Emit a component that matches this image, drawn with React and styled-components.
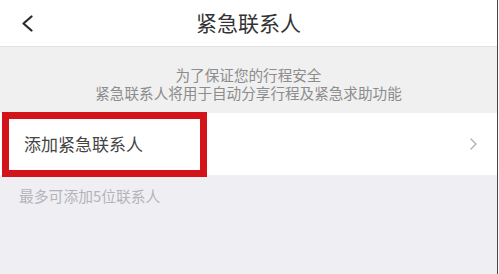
import React from "react";
import styled, { createGlobalStyle } from "styled-components";

const Global = createGlobalStyle`
  html, body { margin: 0; padding: 0; background: #fff; }
  body { font-family: "Noto Sans CJK SC", "Noto Sans", sans-serif; }
`;

const Frame = styled.div`
  width: 499px;
  height: 274px;
  display: flex;
  overflow: hidden;
  background: #fff;
`;

const Screen = styled.div`
  width: 497px;
  height: 274px;
  display: flex;
  flex-direction: column;
  background: #efeff3;
  border-right: 1px solid #474747;
`;

const Header = styled.header`
  height: 46px;
  flex: none;
  display: grid;
  grid-template-columns: 60px 1fr 60px;
  align-items: center;
  background: #fff;
  border-bottom: 1px solid #e4e4e4;
`;

const BackButton = styled.div`
  display: flex;
  align-items: center;
  padding-left: 22px;
  padding-top: 1px;
`;

const Title = styled.h1`
  margin: 0;
  text-align: center;
  font-size: 21px;
  font-weight: 400;
  color: #333;
  line-height: 1;
  padding-bottom: 2px;
`;

const Notice = styled.div`
  padding-top: 21px;
  height: 66px;
  box-sizing: border-box;
  flex: none;
  display: flex;
  flex-direction: column;
  align-items: center;
  font-family: "Liberation Sans", "Noto Sans CJK SC", sans-serif;
  font-size: 14.6px;
  color: #8c8c8c;
  background: #f0f0f0;
`;

const NoticeLine = styled.span`
  display: block;
  height: 18px;
  line-height: 17px;
`;

const Row = styled.div`
  position: relative;
  height: 62px;
  flex: none;
  display: flex;
  align-items: center;
  justify-content: space-between;
  padding: 0 20px 0 24px;
  background: #fff;
`;

const RowLabel = styled.span`
  font-size: 17px;
  color: #444;
  line-height: 1;
  padding-bottom: 2px;
`;

const Highlight = styled.div`
  position: absolute;
  left: 2px;
  top: -1px;
  width: 205px;
  height: 65px;
  box-sizing: border-box;
  border: 7px solid #d3141b;
  pointer-events: none;
`;

const Hint = styled.div`
  padding: 11px 0 0 19px;
  font-size: 14.8px;
  line-height: 20px;
  color: #b4b4b8;
`;

const Chevron = ({ dir, color, w, h, sw }) => (
  <svg width={w} height={h} viewBox={`0 0 ${w} ${h}`} fill="none">
    {dir === "left" ? (
      <path d={`M${w - 1.5} 1.5 L1.5 ${h / 2} L${w - 1.5} ${h - 1.5}`} stroke={color} strokeWidth={sw} strokeLinecap="round" strokeLinejoin="round" />
    ) : (
      <path d={`M1 1 L${w - 1} ${h / 2} L1 ${h - 1}`} stroke={color} strokeWidth={sw} strokeLinecap="round" strokeLinejoin="round" />
    )}
  </svg>
);

export default function App() {
  return (
    <>
      <Global />
      <Frame>
        <Screen>
          <Header>
            <BackButton>
              <Chevron dir="left" color="#2a2a2a" w={11} h={17} sw={2.2} />
            </BackButton>
            <Title>紧急联系人</Title>
            <div />
          </Header>
          <Notice>
            <NoticeLine>为了保证您的行程安全</NoticeLine>
            <NoticeLine>紧急联系人将用于自动分享行程及紧急求助功能</NoticeLine>
          </Notice>
          <Row>
            <RowLabel>添加紧急联系人</RowLabel>
            <Chevron dir="right" color="#b0b0b0" w={7} h={12} sw={1.4} />
            <Highlight />
          </Row>
          <Hint>最多可添加5位联系人</Hint>
        </Screen>
      </Frame>
    </>
  );
}
